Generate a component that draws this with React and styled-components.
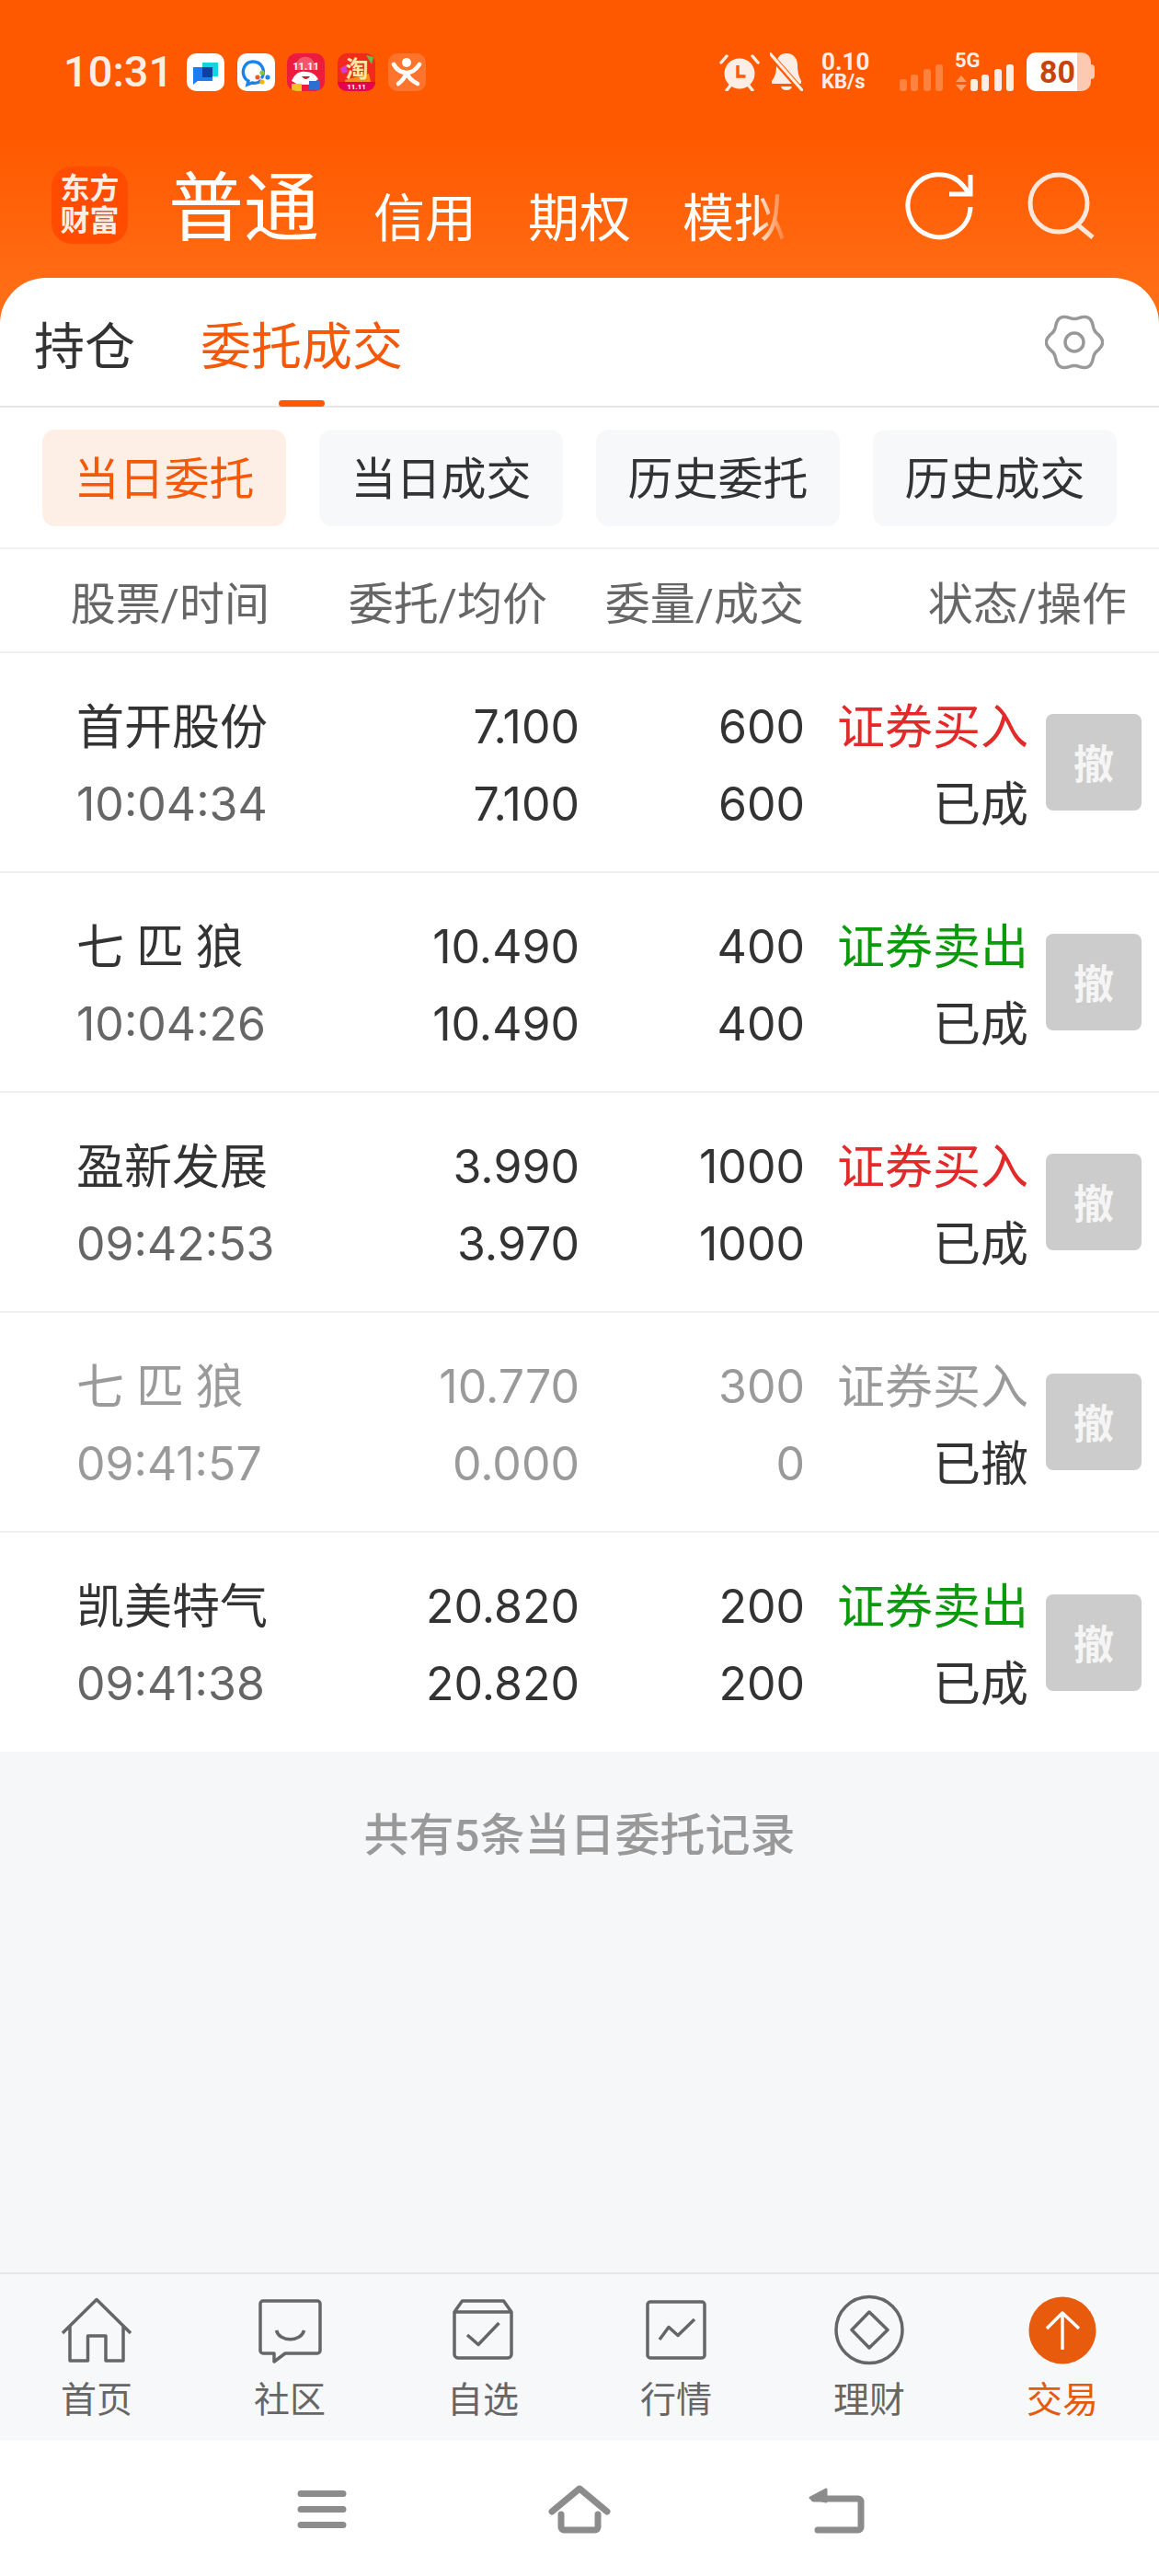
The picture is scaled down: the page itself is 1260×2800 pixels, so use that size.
import styled, { createGlobalStyle } from "styled-components";

const ORDERS = [
  { name: "首开股份", time: "10:04:34", price: "7.100", avg: "7.100", qty: "600", done: "600", side: "证券买入", status: "已成", tone: "buy" },
  { name: "七 匹 狼", time: "10:04:26", price: "10.490", avg: "10.490", qty: "400", done: "400", side: "证券卖出", status: "已成", tone: "sell" },
  { name: "盈新发展", time: "09:42:53", price: "3.990", avg: "3.970", qty: "1000", done: "1000", side: "证券买入", status: "已成", tone: "buy" },
  { name: "七 匹 狼", time: "09:41:57", price: "10.770", avg: "0.000", qty: "300", done: "0", side: "证券买入", status: "已撤", tone: "off" },
  { name: "凯美特气", time: "09:41:38", price: "20.820", avg: "20.820", qty: "200", done: "200", side: "证券卖出", status: "已成", tone: "sell" },
];

const sideColors = { buy: "#e32a2a", sell: "#0b9a0b", off: "#9a9a9a" };

// wavy outline of the settings gear, six soft lobes
const gearPath = (() => {
  const pts = [];
  for (let i = 0; i < 120; i++) {
    const a = (i / 120) * Math.PI * 2;
    const r = 28 + 2.6 * Math.cos(a * 6);
    pts.push(`${(32 + r * Math.cos(a)).toFixed(2)} ${(32 + r * Math.sin(a)).toFixed(2)}`);
  }
  return `M${pts.join("L")}Z`;
})();

const TABS = [
  { label: "首页", icon: <HomeIcon /> },
  { label: "社区", icon: <ChatIcon /> },
  { label: "自选", icon: <WatchIcon /> },
  { label: "行情", icon: <ChartIcon /> },
  { label: "理财", icon: <WealthIcon /> },
  { label: "交易", icon: <TradeIcon />, active: true },
];

function HomeIcon() {
  return (
    <TabSvg viewBox="0 0 80 80">
      <path d="M3 43 40 6.5 77 43M11 35v38h19.5V46H50v27h19V35" />
    </TabSvg>
  );
}

function ChatIcon() {
  return (
    <TabSvg viewBox="0 0 80 80">
      <path d="M11 8h59a3 3 0 0 1 3 3v51a3 3 0 0 1-3 3H35L23 74v-9H11a3 3 0 0 1-3-3V11a3 3 0 0 1 3-3Z" />
      <path d="M25.5 40c3 13 27 13 30 0" />
    </TabSvg>
  );
}

function WatchIcon() {
  return (
    <TabSvg viewBox="0 0 80 80">
      <path d="M17.5 8h45L71 20v46a4 4 0 0 1-4 4H13a4 4 0 0 1-4-4V20ZM9 20h62" />
      <path d="M23 45 35 55.5 57.5 32" />
    </TabSvg>
  );
}

function ChartIcon() {
  return (
    <TabSvg viewBox="0 0 80 80">
      <rect x="9" y="9" width="62" height="61" rx="3" />
      <path d="M22 50 32 36.5 42 45.5 60 28" />
    </TabSvg>
  );
}

function WealthIcon() {
  return (
    <TabSvg viewBox="0 0 80 80">
      <circle cx="40" cy="39.5" r="36" />
      <path d="M40 20 60 39.5 40 59 21 39.5Z" />
    </TabSvg>
  );
}

function TradeIcon() {
  return (
    <TabSvg viewBox="0 0 80 80">
      <circle cx="40" cy="40" r="36.5" fill="#e85a0c" stroke="none" />
      <path d="M40 61V21M23 38 40 21 58 38" stroke="#fff" />
    </TabSvg>
  );
}

const App = () => (
  <Screen>
    <GlobalStyle />
    <Header>
      <StatusBar>
        <StatusLeft>
          <Clock>10:31</Clock>
          <AppIcons>
            <AppIcon>
              <svg viewBox="0 0 41 41" width="41" height="41">
                <rect width="41" height="41" fill="#fff" />
                <path d="M17 10h17v15h-6v-9H17Z" fill="#14d4de" />
                <path d="M7 15h21v15H12l-5 4Z" fill="#1f7cf0" />
                <rect x="17" y="15" width="11" height="11" fill="#0f3fa0" />
              </svg>
            </AppIcon>
            <AppIcon>
              <svg viewBox="0 0 41 41" width="41" height="41">
                <rect width="41" height="41" fill="#fff" />
                <path d="M27 26c4-8-1-17-10-17S5 18 7 24c1 3 3 5 5 6l-1 4 5-2c4 1 7 0 9-2" fill="none" stroke="#1b84e8" strokeWidth="3.4" strokeLinecap="round" />
                <circle cx="27" cy="21" r="2.6" fill="#8bc53f" />
                <circle cx="33" cy="26" r="2.6" fill="#1b84e8" />
                <circle cx="27" cy="31" r="2.6" fill="#f7b500" />
                <circle cx="22" cy="26" r="2.6" fill="#ee5a24" />
              </svg>
            </AppIcon>
            <AppIcon>
              <svg viewBox="0 0 41 41" width="41" height="41">
                <rect width="41" height="41" fill="#ee1c3c" />
                <path d="M9 18C9 8 15 3 21 4c6 0 10 6 10 14Z" fill="#f6556a" />
                <text x="20.5" y="18" textAnchor="middle" fontSize="11" fontWeight="700" fill="#fff">11.11</text>
                <path d="M5 30c3-7 8-11 15-10 7 0 11 3 14 8l-8 6H12Z" fill="#fff" />
                <path d="M16 25c3 4 6 4 9 0Z" fill="#d31a2c" />
                <rect x="5" y="33" width="11" height="8" fill="#f6c026" />
                <rect x="24" y="30" width="12" height="10" fill="#2d6fd0" />
              </svg>
            </AppIcon>
            <AppIcon>
              <svg viewBox="0 0 41 41" width="41" height="41">
                <rect width="41" height="41" fill="#f22a1e" />
                <path d="M31 2 39 4 37 12Z" fill="#5cc24a" />
                <path d="M3 16 9 13 11 20 5 22Z" fill="#d93bd0" />
                <path d="M8 29 34 22 36 31H8Z" fill="#ff8a1f" />
                <text x="21" y="26" textAnchor="middle" fontSize="25" fontWeight="700" fill="#ffe5a8">淘</text>
                <rect y="31" width="41" height="10" fill="#e6004c" />
                <text x="20.5" y="39" textAnchor="middle" fontSize="8" fontWeight="700" fill="#fff">11.11</text>
              </svg>
            </AppIcon>
            <AppIcon>
              <svg viewBox="0 0 41 41" width="41" height="41">
                <rect width="41" height="41" fill="#ff742c" />
                <circle cx="20" cy="10" r="5" fill="#fff" />
                <path d="M6 12c4 7 9 9 14 9s10-3 14-9M20 21c-2 6-5 9-9 12M20 21c2 6 6 9 12 12" fill="none" stroke="#fff" strokeWidth="4.6" strokeLinecap="round" />
              </svg>
            </AppIcon>
          </AppIcons>
        </StatusLeft>
        <StatusRight>
          <svg viewBox="0 0 44 42" width="44" height="42">
            <path d="M2 11 8 4M42 11 36 4M8 41l4-5M36 41l-4-5" stroke="#fdeee5" strokeWidth="3.4" strokeLinecap="round" />
            <circle cx="22" cy="23" r="16.5" fill="#fdeee5" />
            <path d="M20 14v12h8.5" fill="none" stroke="#ff5a00" strokeWidth="3.4" />
          </svg>
          <BellSvg viewBox="0 0 36 42" width="36" height="42">
            <path d="M18 1C10 1 7 7 7 14c0 7-1 12-5 17v3h32v-3c-3-5-4-11-4-17C30 7 26 1 18 1ZM12 37h12c-1 3-3 4-6 4s-5-1-6-4Z" fill="#fdeee5" />
            <path d="M-1 1 35 42" stroke="#ff5a00" strokeWidth="6.4" />
            <path d="M0 1 35 41" stroke="#fdeee5" strokeWidth="3.2" strokeLinecap="round" />
          </BellSvg>
          <Speed>
            <span>0.10</span>
            <small>KB/s</small>
          </Speed>
          <SignalBars viewBox="0 0 48 30" width="48" height="30" $dim>
            <rect x="0" y="17" width="8" height="13" rx="3" />
            <rect x="12" y="12" width="8" height="18" rx="3" />
            <rect x="26" y="6" width="8" height="24" rx="3" />
            <rect x="39" y="1" width="8" height="29" rx="3" />
          </SignalBars>
          <Network>
            <FiveG>5G</FiveG>
            <svg viewBox="0 0 14 17" width="14" height="17">
              <path d="M7 0 13 7H1Z" fill="#fdeee5" opacity=".45" />
              <path d="M7 17 13 10H1Z" fill="#fdeee5" opacity=".45" />
            </svg>
            <SignalBars viewBox="0 0 48 30" width="48" height="30">
              <rect x="0" y="17" width="8" height="13" rx="3" />
              <rect x="12" y="12" width="8" height="18" rx="3" />
              <rect x="26" y="6" width="8" height="24" rx="3" />
              <rect x="39" y="1" width="8" height="29" rx="3" />
            </SignalBars>
          </Network>
          <Battery>
            <BatteryBody>80</BatteryBody>
            <BatteryNub />
          </Battery>
        </StatusRight>
      </StatusBar>
      <TopNav>
        <Logo>
          <span>东方</span>
          <span>财富</span>
        </Logo>
        <MainTitle>普通</MainTitle>
        <AccountTabs>
          <span>信用</span>
          <span>期权</span>
          <span>模拟</span>
        </AccountTabs>
        <TopActions>
          <svg viewBox="0 0 80 80" width="80" height="80">
            <path d="M75 42A34 34 0 1 1 68 20L74 28M75 7v21H52" fill="none" stroke="#fff" strokeWidth="5" />
          </svg>
          <svg viewBox="0 0 76 76" width="76" height="76">
            <circle cx="36" cy="36" r="31" fill="none" stroke="#fde7da" strokeWidth="5" />
            <path d="M56 59 73 73" stroke="#fde7da" strokeWidth="5" />
          </svg>
        </TopActions>
      </TopNav>
    </Header>

    <Panel>
      <MainTabs>
        <MainTab>持仓</MainTab>
        <MainTab $active>委托成交</MainTab>
        <GearSvg viewBox="0 0 64 64" width="64" height="64">
          <path d={gearPath} />
          <circle cx="32" cy="32" r="10" />
        </GearSvg>
      </MainTabs>
      <Filters>
        <FilterButton $active>当日委托</FilterButton>
        <FilterButton>当日成交</FilterButton>
        <FilterButton>历史委托</FilterButton>
        <FilterButton>历史成交</FilterButton>
      </Filters>
      <TableHead>
        <span>股票/时间</span>
        <span>委托/均价</span>
        <span>委量/成交</span>
        <span>状态/操作</span>
      </TableHead>
      {ORDERS.map((o, i) => {
        const off = o.tone === "off";
        return (
          <OrderRow key={i}>
            <NameCell>
              <Line $color={off ? "#9a9a9a" : "#333"}>{o.name}</Line>
              <Num $color={off ? "#9a9a9a" : "#666"}>{o.time}</Num>
            </NameCell>
            <NumCell>
              <Num $color={off ? "#9a9a9a" : "#333"}>{o.price}</Num>
              <Num $color={off ? "#9a9a9a" : "#333"}>{o.avg}</Num>
            </NumCell>
            <NumCell>
              <Num $color={off ? "#9a9a9a" : "#333"}>{o.qty}</Num>
              <Num $color={off ? "#9a9a9a" : "#333"}>{o.done}</Num>
            </NumCell>
            <NumCell>
              <Line $color={sideColors[o.tone]}>{o.side}</Line>
              <Line $color="#333">{o.status}</Line>
            </NumCell>
            <CancelButton>撤</CancelButton>
          </OrderRow>
        );
      })}
    </Panel>

    <Records>共有5条当日委托记录</Records>

    <TabBar>
      {TABS.map((t) => (
        <TabItem key={t.label} $active={t.active}>
          {t.icon}
          <span>{t.label}</span>
        </TabItem>
      ))}
    </TabBar>

    <SystemBar>
      <svg viewBox="0 0 80 60" width="80" height="60">
        <path d="M17 13.5h46M17 30.5h46M17 47.5h46" />
      </svg>
      <svg viewBox="0 0 80 60" width="80" height="60">
        <path d="M10 33 40 8 70 33M20 36v14a3 3 0 0 0 3 3h34a3 3 0 0 0 3-3V36" />
      </svg>
      <svg viewBox="0 0 80 60" width="80" height="60">
        <path d="M19 53h44a3 3 0 0 0 3-3V22a3 3 0 0 0-3-3H15" />
        <path d="M11 18 28 9v13Z" fill="#8c8c8c" strokeWidth="3" />
      </svg>
    </SystemBar>
  </Screen>
);

export default App;

const GlobalStyle = createGlobalStyle`
  * {
    box-sizing: border-box;
  }
  body {
    margin: 0;
    background: #fff;
    font-family: Roboto, "Noto Sans CJK SC", sans-serif;
  }
`;

const Screen = styled.div`
  width: 1260px;
  height: 2800px;
  display: flex;
  flex-direction: column;
  overflow: hidden;
  background: linear-gradient(180deg, #ff5900 0, #ff5900 150px, #ff7119 350px) no-repeat;
  background-size: 100% 350px;
`;

const Header = styled.header`
  height: 302px;
  flex: none;
`;

const StatusBar = styled.div`
  height: 181px;
  padding: 57px 70px 0 69px;
  display: flex;
  justify-content: space-between;
  align-items: flex-start;
  color: #fdeee5;
`;

const StatusLeft = styled.div`
  display: flex;
  align-items: center;
  height: 42px;
`;

const Clock = styled.div`
  width: 134px;
  font-size: 47px;
  line-height: 42px;
  font-weight: 500;
`;

const AppIcons = styled.div`
  display: flex;
  gap: 13.7px;
`;

const AppIcon = styled.div`
  width: 41px;
  height: 41px;
  border-radius: 10px;
  overflow: hidden;
  svg {
    display: block;
  }
`;

const StatusRight = styled.div`
  display: flex;
  align-items: flex-end;
  height: 42px;
  svg {
    display: block;
  }
`;

const BellSvg = styled.svg`
  margin-left: 11px;
`;

const Speed = styled.div`
  width: 85px;
  margin-left: 20px;
  display: flex;
  flex-direction: column;
  font-weight: 700;
  span {
    font-size: 26px;
    line-height: 24px;
  }
  small {
    font-size: 22px;
    line-height: 20px;
  }
`;

const SignalBars = styled.svg`
  fill: #fdeee5;
  opacity: ${(p) => (p.$dim ? 0.28 : 1)};
`;

const Network = styled.div`
  position: relative;
  margin-left: 12px;
  display: flex;
  align-items: flex-end;
  gap: 3px;
`;

const FiveG = styled.span`
  position: absolute;
  left: 0;
  top: -12px;
  font-size: 22px;
  line-height: 18px;
  font-weight: 700;
`;

const Battery = styled.div`
  margin-left: 13px;
  display: flex;
  align-items: center;
  height: 42px;
`;

const BatteryBody = styled.div`
  width: 70px;
  height: 42px;
  border-radius: 10px;
  padding-left: 14px;
  background: linear-gradient(90deg, #fff 55px, #fdc9b0 55px);
  color: #c8430a;
  font-size: 34px;
  font-weight: 700;
  line-height: 42px;
`;

const BatteryNub = styled.div`
  width: 4px;
  height: 16px;
  border-radius: 0 4px 4px 0;
  background: #fdc9b0;
`;

const TopNav = styled.div`
  height: 84px;
  padding: 0 69px 0 56px;
  display: flex;
  align-items: center;
  color: #fff;
`;

const Logo = styled.div`
  width: 83px;
  height: 84px;
  flex: none;
  border-radius: 22px;
  background: #ff4c00;
  display: flex;
  flex-direction: column;
  justify-content: center;
  align-items: center;
  color: #fdeee5;
  font-size: 32px;
  line-height: 35px;
  font-weight: 700;
`;

const MainTitle = styled.div`
  width: 164px;
  margin-left: 44px;
  padding-top: 8px;
  flex: none;
  font-size: 82px;
  line-height: 84px;
`;

const AccountTabs = styled.div`
  width: 447px;
  margin-left: 59px;
  flex: none;
  display: flex;
  gap: 56px;
  font-size: 56px;
  line-height: 84px;
  padding-top: 30px;
  white-space: nowrap;
  -webkit-mask-image: linear-gradient(90deg, #000 415px, rgba(0, 0, 0, 0.15) 447px);
  mask-image: linear-gradient(90deg, #000 415px, rgba(0, 0, 0, 0.15) 447px);
`;

const TopActions = styled.div`
  margin-left: auto;
  display: flex;
  align-items: center;
  gap: 55px;
  svg {
    display: block;
  }
`;

const Panel = styled.section`
  flex: none;
  background: #fff;
  border-radius: 50px 50px 0 0;
`;

const MainTabs = styled.div`
  height: 141px;
  padding: 0 60px 0 37px;
  display: flex;
  align-items: center;
  gap: 71px;
  border-bottom: 2px solid #e6e6e6;
`;

const MainTab = styled.div`
  position: relative;
  height: 139px;
  font-size: 55px;
  line-height: 150px;
  color: ${(p) => (p.$active ? "#f4590a" : "#333")};
  &::after {
    content: "";
    display: ${(p) => (p.$active ? "block" : "none")};
    position: absolute;
    left: 50%;
    bottom: -1px;
    width: 50px;
    height: 7px;
    margin-left: -25px;
    border-radius: 4px;
    background: #ff5900;
  }
`;

const GearSvg = styled.svg`
  margin-left: auto;
  fill: none;
  stroke: #999;
  stroke-width: 3.5;
`;

const Filters = styled.div`
  height: 154px;
  padding: 24px 46px 0;
  display: flex;
  gap: 36px;
  border-bottom: 2px solid #f2f2f2;
`;

const FilterButton = styled.div`
  width: 265px;
  height: 105px;
  border-radius: 14px;
  background: ${(p) => (p.$active ? "#fdeee6" : "#f7f8fa")};
  color: ${(p) => (p.$active ? "#f4590a" : "#333")};
  font-size: 49px;
  line-height: 110px;
  text-align: center;
`;

const TableHead = styled.div`
  height: 113px;
  padding-left: 80px;
  display: grid;
  grid-template-columns: 213px 302px 279px 351px;
  align-items: center;
  justify-items: end;
  border-bottom: 2px solid #f0f0f0;
  color: #666;
  font-size: 49px;
  white-space: nowrap;
`;

const OrderRow = styled.div`
  height: 239px;
  padding: 0 19px 0 83px;
  display: grid;
  grid-template-columns: 301px 246px 245px 243px 123px;
  align-items: center;
  border-bottom: 2px solid #f0f0f0;
  &:last-child {
    height: 238px;
    border-bottom: none;
  }
`;

const NameCell = styled.div`
  padding-top: 10px;
  display: flex;
  flex-direction: column;
  white-space: nowrap;
`;

const NumCell = styled(NameCell)`
  align-items: flex-end;
`;

const Line = styled.div`
  height: 84px;
  font-size: 52px;
  line-height: 84px;
  color: ${(p) => p.$color};
`;

const Num = styled(Line)`
  font-family: Inter, Roboto, sans-serif;
  font-size: 50px;
  font-weight: 400;
  line-height: 80px;
`;

const CancelButton = styled.div`
  justify-self: end;
  width: 104px;
  height: 105px;
  border-radius: 8px;
  background: #cccccc;
  color: #f5f5f5;
  font-size: 44px;
  font-weight: 700;
  line-height: 112px;
  text-align: center;
`;

const Records = styled.div`
  flex: 1;
  padding-top: 58px;
  background: #f6f7f9;
  color: #999;
  font-size: 49px;
  font-weight: 500;
  line-height: 68px;
  text-align: center;
`;

const TabBar = styled.nav`
  height: 183px;
  flex: none;
  padding-top: 21px;
  display: grid;
  grid-template-columns: repeat(6, 1fr);
  background: #f7f8fa;
  border-top: 2px solid #e6e7e9;
`;

const TabItem = styled.div`
  display: flex;
  flex-direction: column;
  align-items: center;
  color: ${(p) => (p.$active ? "#e55a0e" : "#666")};
  font-size: 39px;
  line-height: 48px;
  span {
    margin-top: 12px;
  }
`;

const TabSvg = styled.svg`
  display: block;
  width: 80px;
  height: 80px;
  fill: none;
  stroke: #666;
  stroke-width: 3.5;
  stroke-linejoin: round;
`;

const SystemBar = styled.div`
  height: 147px;
  flex: none;
  padding-top: 44px;
  display: flex;
  justify-content: center;
  align-items: flex-start;
  gap: 200px;
  background: #fff;
  svg {
    display: block;
    fill: none;
    stroke: #8c8c8c;
    stroke-width: 7;
    stroke-linecap: round;
    stroke-linejoin: round;
  }
`;
